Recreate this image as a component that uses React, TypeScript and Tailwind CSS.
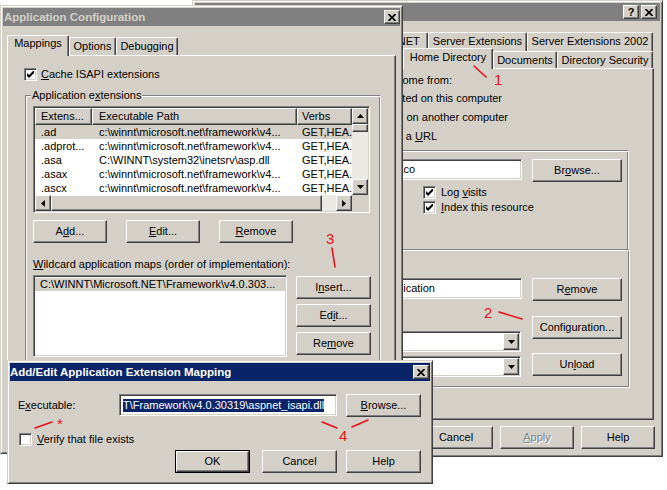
import React from "react";

const RAISED =
  "bg-[#d4d0c8] border border-t-white border-l-white border-r-[#404040] border-b-[#404040] shadow-[inset_-1px_-1px_#808080]";
const SUNKEN =
  "border border-t-[#808080] border-l-[#808080] border-r-white border-b-white shadow-[inset_1px_1px_#404040,inset_-1px_-1px_#d4d0c8] p-px";
const ETCHED =
  "border border-t-[#808080] border-l-[#808080] border-r-white border-b-white shadow-[inset_1px_1px_#fff,inset_-1px_-1px_#808080]";
const ETCHED_OPEN =
  "border-t border-l border-r border-t-[#808080] border-l-[#808080] border-r-white shadow-[inset_1px_1px_#fff,inset_-1px_0_#808080]";
const FRAME =
  "bg-[#d4d0c8] border border-t-[#d4d0c8] border-l-[#d4d0c8] border-r-[#404040] border-b-[#404040] shadow-[inset_1px_1px_#fff,inset_-1px_-1px_#808080] p-[2px]";
const TAB =
  "bg-[#d4d0c8] border-l border-t border-r border-l-white border-t-white border-r-[#404040] shadow-[inset_-1px_0_#808080] rounded-t-[2px] flex justify-center whitespace-nowrap shrink-0";
const PANEL =
  "bg-[#d4d0c8] border border-t-white border-l-white border-r-[#404040] border-b-[#404040] shadow-[inset_-1px_-1px_#808080]";

type P = { className?: string; children?: React.ReactNode };

function Btn({ className = "", children }: P) {
  return (
    <div className={`${RAISED} flex items-center justify-center shrink-0 whitespace-nowrap ${className}`}>
      {children}
    </div>
  );
}

function DefBtn({ className = "", children }: P) {
  return (
    <div className={`border border-black shrink-0 ${className}`}>
      <div className={`${RAISED} w-full h-full flex items-center justify-center`}>{children}</div>
    </div>
  );
}

function Check({ checked = false }: { checked?: boolean }) {
  return (
    <div className={`${SUNKEN} bg-white w-[13px] h-[13px] shrink-0 flex items-center justify-center`}>
      {checked && (
        <svg width="7" height="7" viewBox="0 0 7 7">
          <path d="M0 2 L2 4 L7 -1 L7 2 L2 7 L0 5 Z" fill="#000" />
        </svg>
      )}
    </div>
  );
}

function XGlyph() {
  return (
    <svg width="8" height="7" viewBox="0 0 8 7">
      <path d="M0.5 0 L7.5 7 M7.5 0 L0.5 7" stroke="#000" strokeWidth="1.7" />
    </svg>
  );
}

function CapBtn({ children }: P) {
  return <div className={`${RAISED} w-[16px] h-[14px] flex items-center justify-center shrink-0`}>{children}</div>;
}

function Tri({ dir }: { dir: "up" | "down" | "left" | "right" }) {
  if (dir === "up")
    return (
      <svg width="7" height="4" viewBox="0 0 7 4">
        <path d="M0 4 L3.5 0 L7 4 Z" fill="#000" />
      </svg>
    );
  if (dir === "down")
    return (
      <svg width="7" height="4" viewBox="0 0 7 4">
        <path d="M0 0 L7 0 L3.5 4 Z" fill="#000" />
      </svg>
    );
  if (dir === "left")
    return (
      <svg width="4" height="7" viewBox="0 0 4 7">
        <path d="M4 0 L4 7 L0 3.5 Z" fill="#000" />
      </svg>
    );
  return (
    <svg width="4" height="7" viewBox="0 0 4 7">
      <path d="M0 0 L4 3.5 L0 7 Z" fill="#000" />
    </svg>
  );
}

const PATH = "c:\\winnt\\microsoft.net\\framework\\v4...";
const ROWS: [string, string, string][] = [
  [".ad", PATH, "GET,HEA.."],
  [".adprot...", PATH, "GET,HEA.."],
  [".asa", "C:\\WINNT\\system32\\inetsrv\\asp.dll", "GET,HEA.."],
  [".asax", PATH, "GET,HEA.."],
  [".ascx", PATH, "GET,HEA.."],
];

function ListView() {
  return (
    <div className={`${SUNKEN} bg-white mt-[10px] ml-[7px] w-[337px] h-[107px] flex flex-col shrink-0`}>
      <div className="flex h-[87px]">
        <div className="w-[317px] flex flex-col">
          <div className="flex h-[17px]">
            <div className={`${RAISED} w-[57px] pl-[5px] flex items-center whitespace-nowrap`}>Extens...</div>
            <div className={`${RAISED} w-[205px] pl-[6px] flex items-center whitespace-nowrap`}>Executable Path</div>
            <div className={`${RAISED} w-[55px] pl-[4px] flex items-center whitespace-nowrap`}>Verbs</div>
          </div>
          {ROWS.map((r, i) => (
            <div key={i} className={`flex h-[14px] items-center whitespace-nowrap ${i === 0 ? "bg-[#d4d0c8]" : ""}`}>
              <div className="w-[57px] pl-[6px]">{r[0]}</div>
              <div className="w-[205px] pl-[7px]">{r[1]}</div>
              <div className="w-[55px] pl-[5px]">{r[2]}</div>
            </div>
          ))}
        </div>
        <div className="w-[16px] flex flex-col">
          <Btn className="w-[16px] h-[16px]">
            <Tri dir="up" />
          </Btn>
          <Btn className="w-[16px] h-[8px]" />
          <div className="flex-1 bg-[#ebe9e4]" />
          <Btn className="w-[16px] h-[16px]">
            <Tri dir="down" />
          </Btn>
        </div>
      </div>
      <div className="flex h-[16px]">
        <div className="w-[317px] flex">
          <Btn className="w-[16px] h-[16px]">
            <Tri dir="left" />
          </Btn>
          <Btn className="w-[271px] h-[16px]" />
          <div className="flex-1 bg-[#ebe9e4]" />
          <Btn className="w-[16px] h-[16px]">
            <Tri dir="right" />
          </Btn>
        </div>
        <div className="w-[16px] bg-[#d4d0c8]" />
      </div>
    </div>
  );
}

function Combo() {
  return (
    <div className={`${SUNKEN} bg-white w-[231px] h-[21px] flex items-center justify-end shrink-0`}>
      <Btn className="w-[16px] h-[17px]">
        <Tri dir="down" />
      </Btn>
    </div>
  );
}

function BackWindow() {
  return (
    <div className={`absolute left-[192px] top-0 w-[471px] h-[457px] flex flex-col ${FRAME}`}>
      <div className="h-[18px] bg-[#808080] flex items-center justify-end pr-[3px] shrink-0">
        <div className="flex gap-[2px]">
          <CapBtn>
            <span className="font-bold text-[11px] leading-none">?</span>
          </CapBtn>
          <CapBtn>
            <XGlyph />
          </CapBtn>
        </div>
      </div>
      <div className="mt-[11px] ml-[4px] flex flex-col shrink-0">
        <div className="flex h-[19px]">
          <div className={`${TAB} w-[80px] h-[19px] pt-[2px]`} />
          <div className={`${TAB} w-[87px] h-[19px] pt-[2px]`} />
          <div className={`${TAB} w-[62px] h-[19px] pt-[2px]`}>ASP.NET</div>
          <div className={`${TAB} w-[99px] h-[19px] pt-[2px]`}>Server Extensions</div>
          <div className={`${TAB} w-[126px] h-[19px] pt-[2px]`}>Server Extensions 2002</div>
        </div>
        <div className="relative flex items-end h-[17px]">
          <div className={`${TAB} w-[62px] h-[17px] pt-[2px]`} />
          <div className={`${TAB} w-[72px] h-[17px] pt-[2px]`} />
          <div className={`${TAB} w-[70px] h-[17px] pt-[2px]`} />
          <div className={`${TAB} relative z-10 w-[90px] h-[21px] -mb-px pt-[2px]`}>Home Directory</div>
          <div className={`${TAB} w-[64px] h-[17px] pt-[2px]`}>Documents</div>
          <div className={`${TAB} w-[96px] h-[17px] pt-[2px]`}>Directory Security</div>
        </div>
      </div>
      <div className={`${PANEL} ml-[4px] w-[455px] h-[352px] flex flex-col shrink-0`}>
        <div className="mt-[5px] w-[252px] h-[13px] flex justify-end whitespace-nowrap">
          The content for this resource should come from:
        </div>
        <div className="mt-[5px] w-[302px] h-[13px] flex justify-end whitespace-nowrap">
          A directory located on this computer
        </div>
        <div className="mt-[6px] w-[308px] h-[13px] flex justify-end whitespace-nowrap">
          A share located on another computer
        </div>
        <div className="mt-[6px] w-[237px] h-[13px] flex justify-end whitespace-nowrap">
          <span>
            A redirection to a <u>U</u>RL
          </span>
        </div>
        <div className={`${ETCHED_OPEN} mt-[7px] ml-[8px] w-[421px] h-[99px] flex flex-col shrink-0`}>
          <div className="mt-[8px] flex justify-end items-start gap-[10px] pr-[6px]">
            <div className={`${SUNKEN} bg-white w-[232px] h-[21px] flex items-center`}>
              <div className="w-[123px] flex justify-end whitespace-nowrap">c:\inetpub\wwwroot\co</div>
            </div>
            <Btn className="w-[90px] h-[23px]">
              <span>
                Br<u>o</u>wse...
              </span>
            </Btn>
          </div>
          <div className="mt-[4px] ml-[214px] flex items-center gap-[5px] h-[13px]">
            <Check checked />
            <span className="whitespace-nowrap">
              Log <u>v</u>isits
            </span>
          </div>
          <div className="mt-[2px] ml-[214px] flex items-center gap-[5px] h-[13px]">
            <Check checked />
            <span className="whitespace-nowrap">
              <u>I</u>ndex this resource
            </span>
          </div>
        </div>
        <div className={`${ETCHED} ml-[8px] w-[422px] h-[139px] flex justify-end gap-[10px] pr-[7px] shrink-0`}>
          <div className="flex flex-col w-[232px]">
            <div className={`${SUNKEN} bg-white mt-[28px] w-[232px] h-[21px] flex items-center`}>
              <div className="w-[143px] flex justify-end whitespace-nowrap">Default Application</div>
            </div>
            <div className="mt-[32px]">
              <Combo />
            </div>
            <div className="mt-[4px]">
              <Combo />
            </div>
          </div>
          <div className="flex flex-col w-[90px]">
            <Btn className="mt-[28px] w-[90px] h-[23px]">
              <span>
                R<u>e</u>move
              </span>
            </Btn>
            <Btn className="mt-[15px] w-[90px] h-[23px]">Configuration...</Btn>
            <Btn className="mt-[14px] w-[90px] h-[23px]">
              <span>
                Un<u>l</u>oad
              </span>
            </Btn>
          </div>
        </div>
      </div>
      <div className="mt-[6px] flex justify-end gap-[7px] pr-[5px]">
        <Btn className="w-[74px] h-[23px]" />
        <Btn className="w-[74px] h-[23px]">Cancel</Btn>
        <Btn className="w-[74px] h-[23px]">
          <span className="text-[#808080] [text-shadow:1px_1px_0_#fff]">
            <u>A</u>pply
          </span>
        </Btn>
        <Btn className="w-[74px] h-[23px]">Help</Btn>
      </div>
    </div>
  );
}

function AppConfig() {
  return (
    <div className={`absolute left-0 top-[5px] w-[403px] h-[449px] z-10 flex flex-col ${FRAME}`}>
      <div className="h-[18px] bg-[#808080] flex items-center justify-between pl-[1px] shrink-0">
        <span className="font-bold text-[11.5px] text-[#d4d0c8] whitespace-nowrap">Application Configuration</span>
        <CapBtn>
          <XGlyph />
        </CapBtn>
      </div>
      <div className="mt-[11px] ml-[4px] h-[18px] flex items-end shrink-0">
        <div className={`${TAB} relative z-10 w-[62px] h-[21px] -mb-px pt-[1px]`}>Mappings</div>
        <div className={`${TAB} w-[47px] h-[18px] pt-[2px]`}>Options</div>
        <div className={`${TAB} w-[62px] h-[18px] pt-[2px]`}>Debugging</div>
      </div>
      <div className={`${PANEL} ml-[4px] w-[389px] h-[365px] flex flex-col shrink-0`}>
        <div className="mt-[12px] ml-[16px] flex items-center gap-[4px] h-[13px]">
          <Check checked />
          <span className="whitespace-nowrap">
            <u>C</u>ache ISAPI extensions
          </span>
        </div>
        <div className={`${ETCHED} relative mt-[14px] ml-[17px] w-[356px] h-[305px] flex flex-col shrink-0`}>
          <span className="absolute left-[5px] top-[-7px] px-[1px] bg-[#d4d0c8] whitespace-nowrap">
            Application e<u>x</u>tensions
          </span>
          <ListView />
          <div className="mt-[7px] ml-[7px] flex gap-[19px]">
            <Btn className="w-[74px] h-[23px]">
              <span>
                A<u>d</u>d...
              </span>
            </Btn>
            <Btn className="w-[74px] h-[23px]">
              <span>
                <u>E</u>dit...
              </span>
            </Btn>
            <Btn className="w-[74px] h-[23px]">
              <span>
                <u>R</u>emove
              </span>
            </Btn>
          </div>
          <div className="mt-[15px] ml-[7px] h-[13px] whitespace-nowrap">
            <u>W</u>ildcard application maps (order of implementation):
          </div>
          <div className="mt-[4px] ml-[7px] flex items-start">
            <div className={`${SUNKEN} bg-white w-[254px] h-[82px] shrink-0`}>
              <div className="mt-[1px] h-[13px] bg-[#d4d0c8] pl-[5px] whitespace-nowrap">
                {"C:\\WINNT\\Microsoft.NET\\Framework\\v4.0.303..."}
              </div>
            </div>
            <div className="ml-[9px] mt-[1px] flex flex-col gap-[5px]">
              <Btn className="w-[75px] h-[23px]">
                <span>
                  I<u>n</u>sert...
                </span>
              </Btn>
              <Btn className="w-[75px] h-[23px]">
                <span>
                  Ed<u>i</u>t...
                </span>
              </Btn>
              <Btn className="w-[75px] h-[23px]">
                <span>
                  Re<u>m</u>ove
                </span>
              </Btn>
            </div>
          </div>
        </div>
      </div>
    </div>
  );
}

function MappingDialog() {
  return (
    <div className={`absolute left-[7px] top-[360px] w-[426px] h-[124px] z-20 flex flex-col ${FRAME}`}>
      <div className="h-[18px] bg-[#0a246a] flex items-center justify-between pr-[1px] shrink-0">
        <span className="font-bold text-[11.5px] text-white whitespace-nowrap">
          Add/Edit Application Extension Mapping
        </span>
        <CapBtn>
          <XGlyph />
        </CapBtn>
      </div>
      <div className="mt-[13px] ml-[8px] flex items-start">
        <div className="w-[101px] h-[22px] flex items-center whitespace-nowrap">
          <span>
            E<u>x</u>ecutable:
          </span>
        </div>
        <div className={`${SUNKEN} bg-white w-[218px] h-[22px] flex items-center pl-[3px] shrink-0`}>
          <span className="bg-[#0a246a] text-white whitespace-nowrap">
            {"T\\Framework\\v4.0.30319\\aspnet_isapi.dll"}
          </span>
        </div>
        <Btn className="ml-[9px] w-[75px] h-[23px]">
          <span>
            <u>B</u>rowse...
          </span>
        </Btn>
      </div>
      <div className="mt-[16px] ml-[9px] flex items-center gap-[5px] h-[13px]">
        <Check />
        <span className="whitespace-nowrap">
          <u>V</u>erify that file exists
        </span>
      </div>
      <div className="mt-[4px] ml-[165px] flex">
        <DefBtn className="w-[75px] h-[23px]">OK</DefBtn>
        <Btn className="ml-[12px] w-[75px] h-[23px]">Cancel</Btn>
        <Btn className="ml-[9px] w-[75px] h-[23px]">Help</Btn>
      </div>
    </div>
  );
}

export default function App() {
  return (
    <div className="relative w-[667px] h-[490px] bg-white overflow-hidden font-['Liberation_Sans',Arial,sans-serif] text-[11px] leading-[13px] text-black">
      <BackWindow />
      <AppConfig />
      <MappingDialog />
      <svg className="absolute inset-0 z-30 pointer-events-none" width="667" height="490" viewBox="0 0 667 490">
        <g stroke="#e8101a" strokeWidth="1.6" strokeLinecap="round">
          <line x1="474" y1="66" x2="486" y2="77" />
          <line x1="499" y1="312" x2="522" y2="319" />
          <line x1="332" y1="248" x2="335" y2="267" />
          <line x1="322" y1="422" x2="337" y2="428" />
          <line x1="352" y1="427" x2="368" y2="420" />
          <line x1="35" y1="428" x2="52" y2="422" />
        </g>
      </svg>
      <span className="absolute z-30 left-[494px] top-[72px] text-[15px] leading-[15px] text-[#e8101a]">1</span>
      <span className="absolute z-30 left-[484px] top-[305px] text-[15px] leading-[15px] text-[#e8101a]">2</span>
      <span className="absolute z-30 left-[326px] top-[231px] text-[15px] leading-[15px] text-[#e8101a]">3</span>
      <span className="absolute z-30 left-[339px] top-[428px] text-[15px] leading-[15px] text-[#e8101a]">4</span>
      <span className="absolute z-30 left-[57px] top-[416px] text-[15px] leading-[15px] text-[#e8101a]">*</span>
    </div>
  );
}
